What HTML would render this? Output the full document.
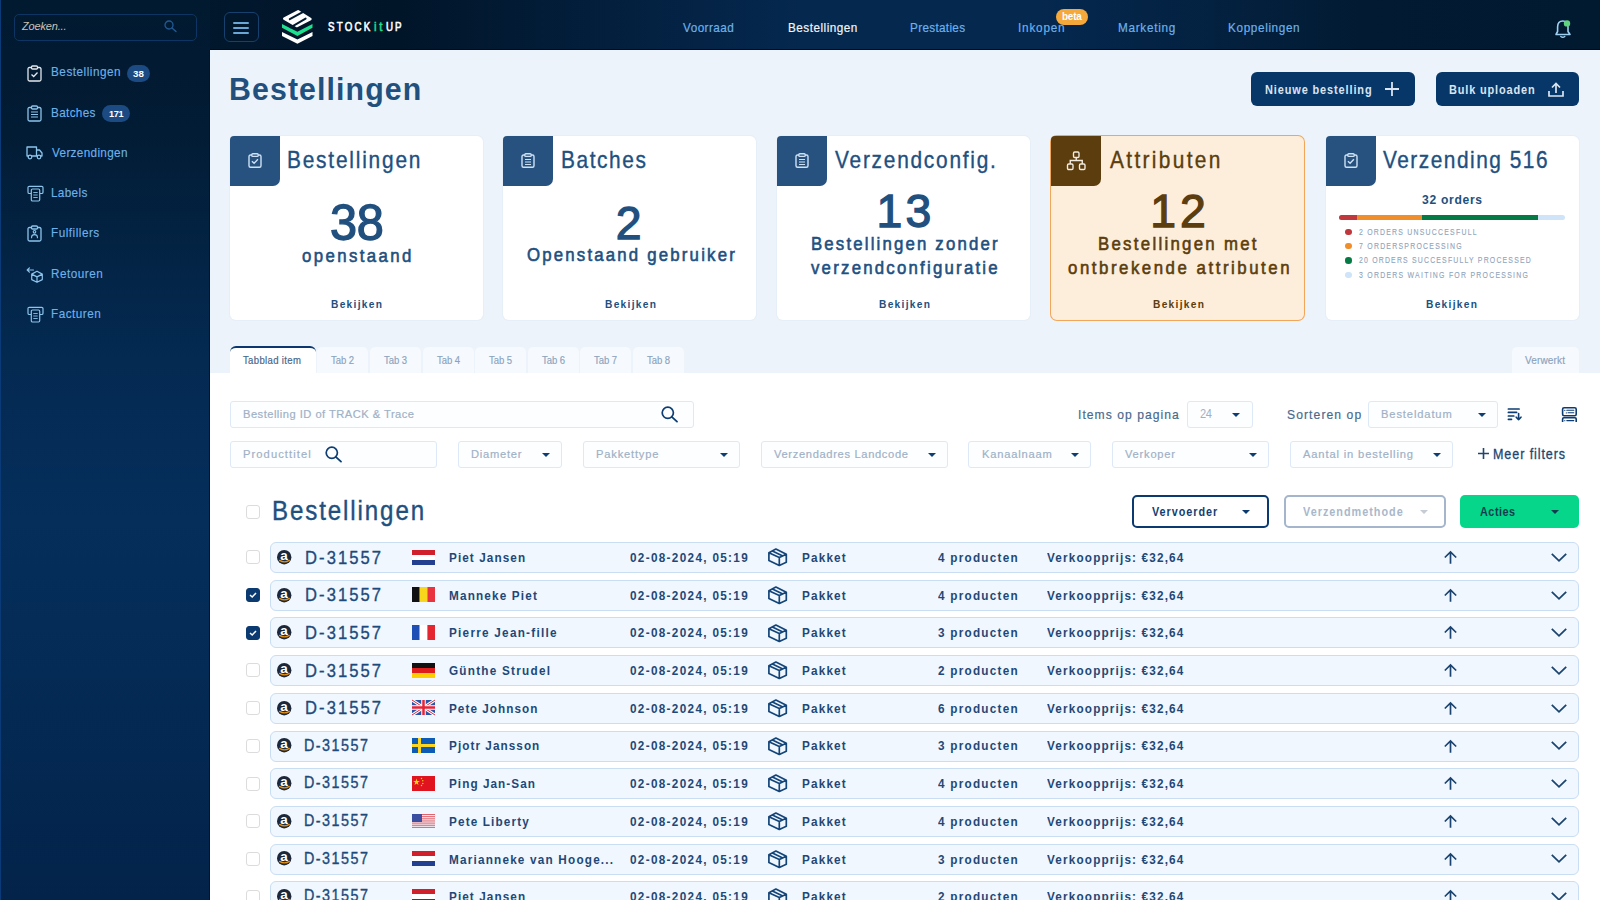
<!DOCTYPE html>
<html><head><meta charset="utf-8">
<style>
*{box-sizing:border-box}
html,body{margin:0;padding:0}
body{width:1600px;height:900px;overflow:hidden;position:relative;background:#edf3fa;font-family:"Liberation Sans",sans-serif}
.t{position:absolute;white-space:nowrap;line-height:1;}
.a{position:absolute}
svg{position:absolute;overflow:visible}
.card{position:absolute;top:136px;width:253px;height:184px;background:#fff;border-radius:6px;box-shadow:0 0 0 1px #e6eef7}
.ib{position:absolute;left:0;top:0;width:50px;height:50px;background:#27527f;border-radius:4px 0 7px 0}
.tab{position:absolute;top:347px;height:26px;width:51px;background:#f6f9fd;border-radius:5px 5px 0 0}
.fb{position:absolute;height:26.5px;border:1px solid #dde9f7;border-radius:3px;background:#fdfeff}
.row{position:absolute;left:270px;width:1309px;height:31px;background:#f0f7fe;border:1px solid #c9ddf3;border-radius:6px}
.cb{position:absolute;left:246px;width:14px;height:14px;border:1px solid #dcdcdc;border-radius:3px;background:#fff}
.cb.on{background:#0b3a70;border-color:#0b3a70}
.caret{position:absolute;width:0;height:0;border-left:4px solid transparent;border-right:4px solid transparent;border-top:4px solid #0d3d72}
</style></head><body>
<!-- header -->
<div class="a" style="left:0;top:0;width:1600px;height:50px;background:linear-gradient(90deg,#021a31 0%,#011529 25%,#05284f 50%,#05284f 65%,#021b33 85%,#011a30 100%)"></div>
<div class="a" style="left:0;top:49px;width:1600px;height:1px;background:#000c18"></div>
<!-- sidebar -->
<div class="a" style="left:0;top:0;width:210px;height:900px;background:linear-gradient(180deg,#021a30 0%,#021c35 15%,#042a52 40%,#052e5b 58%,#042b55 75%,#03234a 100%)"></div>
<div class="a" style="left:0;top:0;width:1px;height:900px;background:#0a3a78"></div>
<div class="a" style="left:209px;top:50px;width:1px;height:850px;background:#001530"></div>
<!-- white panel -->
<div class="a" style="left:210px;top:373px;width:1390px;height:527px;background:#fff"></div>
<div class="a" style="left:14px;top:14px;width:183px;height:27px;border:1px solid #0d3463;border-radius:5px"></div>
<svg style="left:164px;top:20px" width="13" height="12" viewBox="0 0 13 12"><circle cx="5" cy="5" r="4" fill="none" stroke="#1f5a94" stroke-width="1.3"/><path d="M8 8 L12 11.5" stroke="#1f5a94" stroke-width="1.4" stroke-linecap="round"/></svg>
<div class="a" style="left:224px;top:12px;width:35px;height:30px;border:1px solid #17406f;border-radius:6px"></div>
<div class="a" style="left:233px;top:22px;width:16px;height:2px;background:#6aa6d6;border-radius:1px"></div>
<div class="a" style="left:233px;top:27px;width:16px;height:2px;background:#6aa6d6;border-radius:1px"></div>
<div class="a" style="left:233px;top:32px;width:16px;height:2px;background:#6aa6d6;border-radius:1px"></div>
<svg style="left:278px;top:6px" width="40" height="42" viewBox="0 0 40 42">
<path d="M4 26.1 L19.4 33.6 L34.5 26.1 L34.5 29.9 L19.4 37.8 L4 29.9 Z" fill="#ffffff"/>
<path d="M4 18 L19.4 25.7 L34.5 18 L34.5 21.7 L19.4 30.1 L4 21.7 Z" fill="#1fe08f"/>
<path d="M20.1 5.3 L32.4 13.1 L18.7 20 L6.3 12.7 Z" fill="#ffffff" stroke="#ffffff" stroke-width="2.6" stroke-linejoin="round"/>
<path d="M11.8 13.2 L27 4.8 M27.6 12.6 L12.6 21.3" stroke="#021a30" stroke-width="2" stroke-linecap="round"/>
</svg>
<div class="a" style="left:1056px;top:8.5px;width:32px;height:16.5px;background:#f5a93b;border-radius:9px"></div>
<svg style="left:1553px;top:19px" width="20" height="20" viewBox="0 0 20 20">
<path d="M3 15.5 L17 15.5 L15 12.5 L15 8 Q15 2 9.8 2 Q4.6 2 4.6 8 L4.6 12.5 Z" fill="none" stroke="#9fd0f2" stroke-width="1.6" stroke-linejoin="round"/>
<path d="M7.8 17.5 Q9.8 19.2 11.8 17.5" fill="none" stroke="#9fd0f2" stroke-width="1.4" stroke-linecap="round"/>
<circle cx="14" cy="4.4" r="3.2" fill="#5fd47f"/></svg>
<div class="a" style="left:127px;top:65px;width:23px;height:17px;background:#1b4b82;border-radius:9px"></div>
<div class="a" style="left:102px;top:105px;width:28px;height:17px;background:#1b4b82;border-radius:9px"></div>
<svg style="left:27px;top:65px" width="15" height="17" viewBox="0 0 15 17"><path d="M4.5 2.5 L2.5 2.5 Q1 2.5 1 4 L1 14.5 Q1 16 2.5 16 L12.5 16 Q14 16 14 14.5 L14 4 Q14 2.5 12.5 2.5 L10.5 2.5" fill="none" stroke="#e3e8ee" stroke-width="1.3"/><rect x="4.5" y="1" width="6" height="3" rx="1" fill="none" stroke="#e3e8ee" stroke-width="1.3"/><path d="M4.5 9.5 L6.7 11.5 L10.5 7.5" fill="none" stroke="#e3e8ee" stroke-width="1.3"/></svg>
<svg style="left:27px;top:105px" width="15" height="17" viewBox="0 0 15 17"><path d="M4.5 2.5 L2.5 2.5 Q1 2.5 1 4 L1 14.5 Q1 16 2.5 16 L12.5 16 Q14 16 14 14.5 L14 4 Q14 2.5 12.5 2.5 L10.5 2.5" fill="none" stroke="#8cc4ec" stroke-width="1.3"/><rect x="4.5" y="1" width="6" height="3" rx="1" fill="none" stroke="#8cc4ec" stroke-width="1.3"/><path d="M4 7 H11 M4 9.5 H11 M4 12 H11" stroke="#8cc4ec" stroke-width="1.2"/></svg>
<svg style="left:26px;top:145px" width="17" height="15" viewBox="0 0 17 15"><path d="M1 2 H10.5 V11 H1 Z M10.5 5 H13.5 L16 8 V11 H10.5" fill="none" stroke="#8cc4ec" stroke-width="1.3" stroke-linejoin="round"/><circle cx="4" cy="12" r="1.8" fill="#032040" stroke="#8cc4ec" stroke-width="1.2"/><circle cx="13" cy="12" r="1.8" fill="#032040" stroke="#8cc4ec" stroke-width="1.2"/></svg>
<svg style="left:27px;top:185px" width="17" height="17" viewBox="0 0 17 17"><path d="M4 8.5 H2.3 Q1 8.5 1 7.2 V2.6 Q1 1.3 2.3 1.3 H14.7 Q16 1.3 16 2.6 V7.2 Q16 8.5 14.7 8.5 H13" fill="none" stroke="#8cc4ec" stroke-width="1.2"/><rect x="4.3" y="4" width="8.4" height="12" rx="1.2" fill="none" stroke="#8cc4ec" stroke-width="1.2"/><path d="M6.3 7.5 H10.7 M6.3 10 H10.7 M6.3 12.5 H10.7" stroke="#8cc4ec" stroke-width="0.9"/></svg>
<svg style="left:27px;top:225px" width="15" height="17" viewBox="0 0 15 17"><path d="M4.5 2.5 L2.5 2.5 Q1 2.5 1 4 L1 14.5 Q1 16 2.5 16 L12.5 16 Q14 16 14 14.5 L14 4 Q14 2.5 12.5 2.5 L10.5 2.5" fill="none" stroke="#8cc4ec" stroke-width="1.3"/><rect x="4.5" y="1" width="6" height="3" rx="1" fill="none" stroke="#8cc4ec" stroke-width="1.3"/><circle cx="7.5" cy="6.8" r="1.3" fill="none" stroke="#8cc4ec" stroke-width="1.1"/><path d="M4.6 13.2 V12 Q4.6 9.6 7.5 9.6 Q10.4 9.6 10.4 12 V13.2" fill="none" stroke="#8cc4ec" stroke-width="1.1"/></svg>
<svg style="left:26px;top:267px" width="18" height="16" viewBox="0 0 18 16"><path d="M11 4.2 L16.3 7.1 V12.6 L11 15.3 L5.7 12.6 V7.1 Z M5.7 7.1 L11 9.9 L16.3 7.1 M11 9.9 V15.3" fill="none" stroke="#8cc4ec" stroke-width="1.2" stroke-linejoin="round"/><path d="M1.2 3 H7.5 M1.2 3 L3.4 0.9 M1.2 3 L3.4 5.1" fill="none" stroke="#8cc4ec" stroke-width="1.2" stroke-linecap="round" stroke-linejoin="round"/></svg>
<svg style="left:27px;top:306px" width="17" height="17" viewBox="0 0 17 17"><path d="M4 8.5 H2.3 Q1 8.5 1 7.2 V2.6 Q1 1.3 2.3 1.3 H14.7 Q16 1.3 16 2.6 V7.2 Q16 8.5 14.7 8.5 H13" fill="none" stroke="#8cc4ec" stroke-width="1.2"/><rect x="4.3" y="4" width="8.4" height="12" rx="1.2" fill="none" stroke="#8cc4ec" stroke-width="1.2"/><path d="M6.3 7.5 H10.7 M6.3 10 H10.7 M6.3 12.5 H10.7" stroke="#8cc4ec" stroke-width="0.9"/></svg>
<div class="a" style="left:1251px;top:72px;width:164px;height:34px;background:#063768;border-radius:6px"></div>
<div class="a" style="left:1436px;top:72px;width:143px;height:34px;background:#063768;border-radius:6px"></div>
<svg style="left:1385px;top:82px" width="14" height="14" viewBox="0 0 14 14"><path d="M7 0 V14 M0 7 H14" stroke="#dbe4ef" stroke-width="1.8"/></svg>
<svg style="left:1548px;top:82px" width="16" height="15" viewBox="0 0 16 15"><path d="M1 9 V14 H15 V9" fill="none" stroke="#dbe4ef" stroke-width="1.7"/><path d="M8 11 V1.5 M4 5.5 L8 1.5 L12 5.5" fill="none" stroke="#dbe4ef" stroke-width="1.7"/></svg>
<div class="card" style="left:230.0px"></div>
<div class="ib" style="left:230.0px;top:136px"></div>
<div class="card" style="left:503.3px"></div>
<div class="ib" style="left:503.3px;top:136px"></div>
<div class="card" style="left:777.0px"></div>
<div class="ib" style="left:777.0px;top:136px"></div>
<div class="card" style="left:1051.0px;background:#fdeedb;box-shadow:0 0 0 1px #f2a65a"></div>
<div class="ib" style="left:1051.0px;top:136px;background:#5b3d0e"></div>
<div class="card" style="left:1325.5px"></div>
<div class="ib" style="left:1325.5px;top:136px"></div>
<svg style="left:248.0px;top:153.0px" width="14" height="16" viewBox="0 0 14 16"><path d="M3.8 2 L2.5 2 Q1 2 1 3.5 L1 12.8 Q1 14.3 2.5 14.3 L11.5 14.3 Q13 14.3 13 12.8 L13 3.5 Q13 2 11.5 2 L10.2 2" fill="none" stroke="#cde1f6" stroke-width="1.4"/><rect x="3.8" y="0.8" width="6.4" height="2.6" rx="1" fill="none" stroke="#cde1f6" stroke-width="1.4"/><path d="M3.9 8.3 L6.1 10.3 L9.9 6.3" fill="none" stroke="#cde1f6" stroke-width="1.4"/></svg>
<svg style="left:521.3px;top:153.0px" width="14" height="16" viewBox="0 0 14 16"><path d="M3.8 2 L2.5 2 Q1 2 1 3.5 L1 12.8 Q1 14.3 2.5 14.3 L11.5 14.3 Q13 14.3 13 12.8 L13 3.5 Q13 2 11.5 2 L10.2 2" fill="none" stroke="#cde1f6" stroke-width="1.4"/><rect x="3.8" y="0.8" width="6.4" height="2.6" rx="1" fill="none" stroke="#cde1f6" stroke-width="1.4"/><path d="M4 6.5 H10 M4 9 H10 M4 11.5 H10" stroke="#cde1f6" stroke-width="1.2"/></svg>
<svg style="left:795.0px;top:153.0px" width="14" height="16" viewBox="0 0 14 16"><path d="M3.8 2 L2.5 2 Q1 2 1 3.5 L1 12.8 Q1 14.3 2.5 14.3 L11.5 14.3 Q13 14.3 13 12.8 L13 3.5 Q13 2 11.5 2 L10.2 2" fill="none" stroke="#cde1f6" stroke-width="1.4"/><rect x="3.8" y="0.8" width="6.4" height="2.6" rx="1" fill="none" stroke="#cde1f6" stroke-width="1.4"/><path d="M4 6.5 H10 M4 9 H10 M4 11.5 H10" stroke="#cde1f6" stroke-width="1.2"/></svg>
<svg style="left:1343.5px;top:153.0px" width="14" height="16" viewBox="0 0 14 16"><path d="M3.8 2 L2.5 2 Q1 2 1 3.5 L1 12.8 Q1 14.3 2.5 14.3 L11.5 14.3 Q13 14.3 13 12.8 L13 3.5 Q13 2 11.5 2 L10.2 2" fill="none" stroke="#cde1f6" stroke-width="1.4"/><rect x="3.8" y="0.8" width="6.4" height="2.6" rx="1" fill="none" stroke="#cde1f6" stroke-width="1.4"/><path d="M3.9 8.3 L6.1 10.3 L9.9 6.3" fill="none" stroke="#cde1f6" stroke-width="1.4"/></svg>
<svg style="left:1066px;top:151px" width="21" height="20" viewBox="0 0 21 20"><rect x="7.5" y="1" width="5.5" height="5.5" rx="1.2" fill="none" stroke="#f2ebe0" stroke-width="1.4"/><rect x="1.5" y="13" width="5.5" height="5.5" rx="1.2" fill="none" stroke="#f2ebe0" stroke-width="1.4"/><rect x="13.5" y="13" width="5.5" height="5.5" rx="1.2" fill="none" stroke="#f2ebe0" stroke-width="1.4"/><path d="M10.25 6.5 V9.5 M4.25 13 V9.5 H16.25 V13" fill="none" stroke="#f2ebe0" stroke-width="1.4"/></svg>
<div class="a" style="left:1338.5px;top:215px;width:226.5px;height:5px;border-radius:3px;overflow:hidden;background:#cfe4f8"><div class="a" style="left:0;top:0;width:18.5px;height:5px;background:#c0373c"></div><div class="a" style="left:18.5px;top:0;width:64.5px;height:5px;background:#f08e2c"></div><div class="a" style="left:83px;top:0;width:116.3px;height:5px;background:#067a45"></div></div>
<div class="a" style="left:1345px;top:228.9px;width:6.6px;height:6.6px;border-radius:50%;background:#c0373c"></div>
<div class="a" style="left:1345px;top:242.7px;width:6.6px;height:6.6px;border-radius:50%;background:#f08e2c"></div>
<div class="a" style="left:1345px;top:257.1px;width:6.6px;height:6.6px;border-radius:50%;background:#067a45"></div>
<div class="a" style="left:1345px;top:271.6px;width:6.6px;height:6.6px;border-radius:50%;background:#cfe4f8"></div>
<div class="a" style="left:229.5px;top:345.5px;width:86.5px;height:28px;background:#fff;border-radius:6px 6px 0 0;border-top:2px solid #0b3670"></div>
<div class="tab" style="left:317.4px"></div>
<div class="tab" style="left:370.0px"></div>
<div class="tab" style="left:422.6px"></div>
<div class="tab" style="left:475.2px"></div>
<div class="tab" style="left:527.8px"></div>
<div class="tab" style="left:580.4px"></div>
<div class="tab" style="left:633.0px"></div>
<div class="tab" style="left:1512px;width:67px"></div>
<div class="fb" style="left:229.5px;top:401px;width:464px"></div>
<svg style="left:660.5px;top:406.0px" width="18" height="16" viewBox="0 0 18 16"><circle cx="6.8" cy="6.8" r="5.6" fill="none" stroke="#0d3d72" stroke-width="1.7"/><path d="M10.8 10.8 L16 15.6" stroke="#0d3d72" stroke-width="1.8" stroke-linecap="round"/></svg>
<div class="fb" style="left:229.5px;top:441px;width:207px"></div>
<svg style="left:324.5px;top:446.0px" width="18" height="16" viewBox="0 0 18 16"><circle cx="6.8" cy="6.8" r="5.6" fill="none" stroke="#0d3d72" stroke-width="1.7"/><path d="M10.8 10.8 L16 15.6" stroke="#0d3d72" stroke-width="1.8" stroke-linecap="round"/></svg>
<div class="fb" style="left:457.5px;top:441px;width:104.0px"></div>
<div class="caret" style="left:542.0px;top:452.5px"></div>
<div class="fb" style="left:582.5px;top:441px;width:157.0px"></div>
<div class="caret" style="left:720.0px;top:452.5px"></div>
<div class="fb" style="left:760.5px;top:441px;width:187.5px"></div>
<div class="caret" style="left:927.8px;top:452.5px"></div>
<div class="fb" style="left:968.4px;top:441px;width:123.0px"></div>
<div class="caret" style="left:1071.3px;top:452.5px"></div>
<div class="fb" style="left:1111.7px;top:441px;width:157.3px"></div>
<div class="caret" style="left:1248.8px;top:452.5px"></div>
<div class="fb" style="left:1290.0px;top:441px;width:162.5px"></div>
<div class="caret" style="left:1432.5px;top:452.5px"></div>
<div class="fb" style="left:1186.6px;top:401.2px;width:66px"></div>
<div class="caret" style="left:1232px;top:413px"></div>
<div class="fb" style="left:1368px;top:401px;width:130px"></div>
<div class="caret" style="left:1478px;top:413px"></div>
<svg style="left:1478px;top:448px" width="11" height="11" viewBox="0 0 11 11"><path d="M5.5 0 V11 M0 5.5 H11" stroke="#21456f" stroke-width="1.6"/></svg>
<svg style="left:1507px;top:407px" width="16" height="14" viewBox="0 0 16 14"><path d="M1.4 2 H12.1 M1.4 5.4 H9.6 M1.4 9 H6.8 M1.4 12.3 H4.5" stroke="#0c3c72" stroke-width="1.7" stroke-linecap="round"/><path d="M11.6 6.5 V12.7 M9.2 10.2 L11.6 12.7 L14 10.2" fill="none" stroke="#0c3c72" stroke-width="1.6" stroke-linecap="round" stroke-linejoin="round"/></svg>
<svg style="left:1560.5px;top:406px" width="17" height="17" viewBox="0 0 17 17"><rect x="1.6" y="1.8" width="13.6" height="8" rx="1.5" fill="none" stroke="#0c3c72" stroke-width="1.6"/><path d="M3.8 4.3 V4.5 M5.8 4.2 H12.8 M5.3 6.8 V7 M7 6.8 H12.8 M3.8 14.5 V14.7 M5.8 14.6 H12.8" stroke="#0c3c72" stroke-width="1.1" stroke-linecap="round"/><path d="M1.6 16 V13 Q1.6 11.8 2.8 11.8 H14 Q15.2 11.8 15.2 13 V16" fill="none" stroke="#0c3c72" stroke-width="1.6"/></svg>
<div class="cb" style="top:505px"></div>
<div class="a" style="left:1132px;top:495px;width:137px;height:33px;border:2px solid #0b3a70;border-radius:5px"></div>
<div class="caret" style="left:1242.4px;top:510px;border-top-color:#0b3a70"></div>
<div class="a" style="left:1283.5px;top:495px;width:162.5px;height:33px;border:2px solid #a4b5cc;border-radius:5px"></div>
<div class="caret" style="left:1419.6px;top:510px;border-top-color:#c3cbd6"></div>
<div class="a" style="left:1460px;top:495px;width:119px;height:33px;background:#06d68a;border-radius:5px"></div>
<div class="caret" style="left:1551px;top:510px;border-top-color:#0e3d4f"></div>
<div class="row" style="top:542.0px"></div>
<div class="cb" style="top:550.3px"></div>
<svg style="left:276.8px;top:549.8px" width="15" height="15" viewBox="0 0 15 15"><circle cx="7.2" cy="7.2" r="7.2" fill="#1c2839"/><text x="7.1" y="9.9" font-family="Liberation Sans" font-weight="700" font-size="13.5" fill="#fff" text-anchor="middle">a</text><path d="M2.6 10.4 Q7.4 13.4 12.3 10.4" fill="none" stroke="#e8900f" stroke-width="1.3" stroke-linecap="round"/></svg>
<svg style="left:412px;top:549.6px" width="23" height="15" viewBox="0 0 23 15"><rect width="23" height="5" fill="#d0202c"/><rect y="5" width="23" height="5" fill="#fff"/><rect y="10" width="23" height="5" fill="#233f8f"/></svg>
<svg style="left:768px;top:548.2px" width="20" height="19" viewBox="0 0 20 19"><path d="M0.9 4.8 L7.9 1 L18.3 6.3 V14.2 L11.3 17.4 L0.9 12.4 Z M0.9 4.8 L11.3 9.6 L18.3 6.3 M11.3 9.6 V17.4 M4.4 2.9 L14.8 8" fill="none" stroke="#144579" stroke-width="1.7" stroke-linejoin="round"/></svg>
<svg style="left:1444px;top:551.0px" width="13" height="13" viewBox="0 0 13 13"><path d="M6.5 12.8 V1 M0.8 6.5 L6.5 0.9 L12.2 6.5" fill="none" stroke="#1b4470" stroke-width="1.7"/></svg>
<svg style="left:1551px;top:552.8px" width="16" height="9" viewBox="0 0 16 9"><path d="M0.8 0.8 L8 7.8 L15.2 0.8" fill="none" stroke="#1b4470" stroke-width="1.8"/></svg>
<div class="row" style="top:579.7px"></div>
<div class="cb on" style="top:588.0px"></div><svg style="left:249px;top:591.0px" width="8" height="8" viewBox="0 0 8 8"><path d="M1 4 L3.2 6 L7 2" fill="none" stroke="#fff" stroke-width="1.5"/></svg>
<svg style="left:276.8px;top:587.5px" width="15" height="15" viewBox="0 0 15 15"><circle cx="7.2" cy="7.2" r="7.2" fill="#1c2839"/><text x="7.1" y="9.9" font-family="Liberation Sans" font-weight="700" font-size="13.5" fill="#fff" text-anchor="middle">a</text><path d="M2.6 10.4 Q7.4 13.4 12.3 10.4" fill="none" stroke="#e8900f" stroke-width="1.3" stroke-linecap="round"/></svg>
<svg style="left:412px;top:587.3px" width="23" height="15" viewBox="0 0 23 15"><rect width="7.7" height="15" fill="#111"/><rect x="7.7" width="7.7" height="15" fill="#f8d61c"/><rect x="15.4" width="7.6" height="15" fill="#e8343e"/></svg>
<svg style="left:768px;top:585.9px" width="20" height="19" viewBox="0 0 20 19"><path d="M0.9 4.8 L7.9 1 L18.3 6.3 V14.2 L11.3 17.4 L0.9 12.4 Z M0.9 4.8 L11.3 9.6 L18.3 6.3 M11.3 9.6 V17.4 M4.4 2.9 L14.8 8" fill="none" stroke="#144579" stroke-width="1.7" stroke-linejoin="round"/></svg>
<svg style="left:1444px;top:588.7px" width="13" height="13" viewBox="0 0 13 13"><path d="M6.5 12.8 V1 M0.8 6.5 L6.5 0.9 L12.2 6.5" fill="none" stroke="#1b4470" stroke-width="1.7"/></svg>
<svg style="left:1551px;top:590.5px" width="16" height="9" viewBox="0 0 16 9"><path d="M0.8 0.8 L8 7.8 L15.2 0.8" fill="none" stroke="#1b4470" stroke-width="1.8"/></svg>
<div class="row" style="top:617.4px"></div>
<div class="cb on" style="top:625.7px"></div><svg style="left:249px;top:628.7px" width="8" height="8" viewBox="0 0 8 8"><path d="M1 4 L3.2 6 L7 2" fill="none" stroke="#fff" stroke-width="1.5"/></svg>
<svg style="left:276.8px;top:625.2px" width="15" height="15" viewBox="0 0 15 15"><circle cx="7.2" cy="7.2" r="7.2" fill="#1c2839"/><text x="7.1" y="9.9" font-family="Liberation Sans" font-weight="700" font-size="13.5" fill="#fff" text-anchor="middle">a</text><path d="M2.6 10.4 Q7.4 13.4 12.3 10.4" fill="none" stroke="#e8900f" stroke-width="1.3" stroke-linecap="round"/></svg>
<svg style="left:412px;top:625.0px" width="23" height="15" viewBox="0 0 23 15"><rect width="7.7" height="15" fill="#1e4fb5"/><rect x="7.7" width="7.7" height="15" fill="#fff"/><rect x="15.4" width="7.6" height="15" fill="#e3262f"/></svg>
<svg style="left:768px;top:623.6px" width="20" height="19" viewBox="0 0 20 19"><path d="M0.9 4.8 L7.9 1 L18.3 6.3 V14.2 L11.3 17.4 L0.9 12.4 Z M0.9 4.8 L11.3 9.6 L18.3 6.3 M11.3 9.6 V17.4 M4.4 2.9 L14.8 8" fill="none" stroke="#144579" stroke-width="1.7" stroke-linejoin="round"/></svg>
<svg style="left:1444px;top:626.4px" width="13" height="13" viewBox="0 0 13 13"><path d="M6.5 12.8 V1 M0.8 6.5 L6.5 0.9 L12.2 6.5" fill="none" stroke="#1b4470" stroke-width="1.7"/></svg>
<svg style="left:1551px;top:628.2px" width="16" height="9" viewBox="0 0 16 9"><path d="M0.8 0.8 L8 7.8 L15.2 0.8" fill="none" stroke="#1b4470" stroke-width="1.8"/></svg>
<div class="row" style="top:655.1px"></div>
<div class="cb" style="top:663.4px"></div>
<svg style="left:276.8px;top:662.9px" width="15" height="15" viewBox="0 0 15 15"><circle cx="7.2" cy="7.2" r="7.2" fill="#1c2839"/><text x="7.1" y="9.9" font-family="Liberation Sans" font-weight="700" font-size="13.5" fill="#fff" text-anchor="middle">a</text><path d="M2.6 10.4 Q7.4 13.4 12.3 10.4" fill="none" stroke="#e8900f" stroke-width="1.3" stroke-linecap="round"/></svg>
<svg style="left:412px;top:662.7px" width="23" height="15" viewBox="0 0 23 15"><rect width="23" height="5" fill="#111"/><rect y="5" width="23" height="5" fill="#dd1d1d"/><rect y="10" width="23" height="5" fill="#ffce00"/></svg>
<svg style="left:768px;top:661.3px" width="20" height="19" viewBox="0 0 20 19"><path d="M0.9 4.8 L7.9 1 L18.3 6.3 V14.2 L11.3 17.4 L0.9 12.4 Z M0.9 4.8 L11.3 9.6 L18.3 6.3 M11.3 9.6 V17.4 M4.4 2.9 L14.8 8" fill="none" stroke="#144579" stroke-width="1.7" stroke-linejoin="round"/></svg>
<svg style="left:1444px;top:664.1px" width="13" height="13" viewBox="0 0 13 13"><path d="M6.5 12.8 V1 M0.8 6.5 L6.5 0.9 L12.2 6.5" fill="none" stroke="#1b4470" stroke-width="1.7"/></svg>
<svg style="left:1551px;top:665.9px" width="16" height="9" viewBox="0 0 16 9"><path d="M0.8 0.8 L8 7.8 L15.2 0.8" fill="none" stroke="#1b4470" stroke-width="1.8"/></svg>
<div class="row" style="top:692.8px"></div>
<div class="cb" style="top:701.1px"></div>
<svg style="left:276.8px;top:700.6px" width="15" height="15" viewBox="0 0 15 15"><circle cx="7.2" cy="7.2" r="7.2" fill="#1c2839"/><text x="7.1" y="9.9" font-family="Liberation Sans" font-weight="700" font-size="13.5" fill="#fff" text-anchor="middle">a</text><path d="M2.6 10.4 Q7.4 13.4 12.3 10.4" fill="none" stroke="#e8900f" stroke-width="1.3" stroke-linecap="round"/></svg>
<svg style="left:412px;top:700.4px" width="23" height="15" viewBox="0 0 23 15"><rect width="23" height="15" fill="#2a55a8"/><path d="M0 0 L23 15 M23 0 L0 15" stroke="#fff" stroke-width="3"/><path d="M0 0 L23 15 M23 0 L0 15" stroke="#e3243a" stroke-width="1"/><path d="M11.5 0 V15 M0 7.5 H23" stroke="#fff" stroke-width="4.5"/><path d="M11.5 0 V15 M0 7.5 H23" stroke="#e3243a" stroke-width="2.5"/></svg>
<svg style="left:768px;top:699.0px" width="20" height="19" viewBox="0 0 20 19"><path d="M0.9 4.8 L7.9 1 L18.3 6.3 V14.2 L11.3 17.4 L0.9 12.4 Z M0.9 4.8 L11.3 9.6 L18.3 6.3 M11.3 9.6 V17.4 M4.4 2.9 L14.8 8" fill="none" stroke="#144579" stroke-width="1.7" stroke-linejoin="round"/></svg>
<svg style="left:1444px;top:701.8px" width="13" height="13" viewBox="0 0 13 13"><path d="M6.5 12.8 V1 M0.8 6.5 L6.5 0.9 L12.2 6.5" fill="none" stroke="#1b4470" stroke-width="1.7"/></svg>
<svg style="left:1551px;top:703.6px" width="16" height="9" viewBox="0 0 16 9"><path d="M0.8 0.8 L8 7.8 L15.2 0.8" fill="none" stroke="#1b4470" stroke-width="1.8"/></svg>
<div class="row" style="top:730.5px"></div>
<div class="cb" style="top:738.8px"></div>
<svg style="left:276.8px;top:738.3px" width="15" height="15" viewBox="0 0 15 15"><circle cx="7.2" cy="7.2" r="7.2" fill="#1c2839"/><text x="7.1" y="9.9" font-family="Liberation Sans" font-weight="700" font-size="13.5" fill="#fff" text-anchor="middle">a</text><path d="M2.6 10.4 Q7.4 13.4 12.3 10.4" fill="none" stroke="#e8900f" stroke-width="1.3" stroke-linecap="round"/></svg>
<svg style="left:412px;top:738.1px" width="23" height="15" viewBox="0 0 23 15"><rect width="23" height="15" fill="#0d5bb5"/><path d="M7.5 0 V15 M0 7.5 H23" stroke="#fcd422" stroke-width="3"/></svg>
<svg style="left:768px;top:736.7px" width="20" height="19" viewBox="0 0 20 19"><path d="M0.9 4.8 L7.9 1 L18.3 6.3 V14.2 L11.3 17.4 L0.9 12.4 Z M0.9 4.8 L11.3 9.6 L18.3 6.3 M11.3 9.6 V17.4 M4.4 2.9 L14.8 8" fill="none" stroke="#144579" stroke-width="1.7" stroke-linejoin="round"/></svg>
<svg style="left:1444px;top:739.5px" width="13" height="13" viewBox="0 0 13 13"><path d="M6.5 12.8 V1 M0.8 6.5 L6.5 0.9 L12.2 6.5" fill="none" stroke="#1b4470" stroke-width="1.7"/></svg>
<svg style="left:1551px;top:741.3px" width="16" height="9" viewBox="0 0 16 9"><path d="M0.8 0.8 L8 7.8 L15.2 0.8" fill="none" stroke="#1b4470" stroke-width="1.8"/></svg>
<div class="row" style="top:768.2px"></div>
<div class="cb" style="top:776.5px"></div>
<svg style="left:276.8px;top:776.0px" width="15" height="15" viewBox="0 0 15 15"><circle cx="7.2" cy="7.2" r="7.2" fill="#1c2839"/><text x="7.1" y="9.9" font-family="Liberation Sans" font-weight="700" font-size="13.5" fill="#fff" text-anchor="middle">a</text><path d="M2.6 10.4 Q7.4 13.4 12.3 10.4" fill="none" stroke="#e8900f" stroke-width="1.3" stroke-linecap="round"/></svg>
<svg style="left:412px;top:775.8px" width="23" height="15" viewBox="0 0 23 15"><rect width="23" height="15" fill="#e0141f"/><path d="M4.5 2.5 L5.3 5 L7.8 5 L5.8 6.5 L6.5 9 L4.5 7.5 L2.5 9 L3.2 6.5 L1.2 5 L3.7 5 Z" fill="#ffd21a"/><circle cx="9.5" cy="2.5" r="0.7" fill="#ffd21a"/><circle cx="10.8" cy="4.8" r="0.7" fill="#ffd21a"/><circle cx="10.8" cy="7.5" r="0.7" fill="#ffd21a"/><circle cx="9.5" cy="9.5" r="0.7" fill="#ffd21a"/></svg>
<svg style="left:768px;top:774.4px" width="20" height="19" viewBox="0 0 20 19"><path d="M0.9 4.8 L7.9 1 L18.3 6.3 V14.2 L11.3 17.4 L0.9 12.4 Z M0.9 4.8 L11.3 9.6 L18.3 6.3 M11.3 9.6 V17.4 M4.4 2.9 L14.8 8" fill="none" stroke="#144579" stroke-width="1.7" stroke-linejoin="round"/></svg>
<svg style="left:1444px;top:777.2px" width="13" height="13" viewBox="0 0 13 13"><path d="M6.5 12.8 V1 M0.8 6.5 L6.5 0.9 L12.2 6.5" fill="none" stroke="#1b4470" stroke-width="1.7"/></svg>
<svg style="left:1551px;top:779.0px" width="16" height="9" viewBox="0 0 16 9"><path d="M0.8 0.8 L8 7.8 L15.2 0.8" fill="none" stroke="#1b4470" stroke-width="1.8"/></svg>
<div class="row" style="top:805.9px"></div>
<div class="cb" style="top:814.2px"></div>
<svg style="left:276.8px;top:813.7px" width="15" height="15" viewBox="0 0 15 15"><circle cx="7.2" cy="7.2" r="7.2" fill="#1c2839"/><text x="7.1" y="9.9" font-family="Liberation Sans" font-weight="700" font-size="13.5" fill="#fff" text-anchor="middle">a</text><path d="M2.6 10.4 Q7.4 13.4 12.3 10.4" fill="none" stroke="#e8900f" stroke-width="1.3" stroke-linecap="round"/></svg>
<svg style="left:412px;top:813.5px" width="23" height="15" viewBox="0 0 23 15"><rect y="0.00" width="23" height="1.07" fill="#e0626a"/><rect y="2.14" width="23" height="1.07" fill="#e0626a"/><rect y="4.28" width="23" height="1.07" fill="#e0626a"/><rect y="6.42" width="23" height="1.07" fill="#e0626a"/><rect y="8.56" width="23" height="1.07" fill="#e0626a"/><rect y="10.70" width="23" height="1.07" fill="#e0626a"/><rect y="12.84" width="23" height="1.07" fill="#e0626a"/><rect y="0" width="23" height="15" fill="none"/><rect width="10" height="8" fill="#3b4fa0"/></svg>
<svg style="left:768px;top:812.1px" width="20" height="19" viewBox="0 0 20 19"><path d="M0.9 4.8 L7.9 1 L18.3 6.3 V14.2 L11.3 17.4 L0.9 12.4 Z M0.9 4.8 L11.3 9.6 L18.3 6.3 M11.3 9.6 V17.4 M4.4 2.9 L14.8 8" fill="none" stroke="#144579" stroke-width="1.7" stroke-linejoin="round"/></svg>
<svg style="left:1444px;top:814.9px" width="13" height="13" viewBox="0 0 13 13"><path d="M6.5 12.8 V1 M0.8 6.5 L6.5 0.9 L12.2 6.5" fill="none" stroke="#1b4470" stroke-width="1.7"/></svg>
<svg style="left:1551px;top:816.7px" width="16" height="9" viewBox="0 0 16 9"><path d="M0.8 0.8 L8 7.8 L15.2 0.8" fill="none" stroke="#1b4470" stroke-width="1.8"/></svg>
<div class="row" style="top:843.6px"></div>
<div class="cb" style="top:851.9px"></div>
<svg style="left:276.8px;top:851.4px" width="15" height="15" viewBox="0 0 15 15"><circle cx="7.2" cy="7.2" r="7.2" fill="#1c2839"/><text x="7.1" y="9.9" font-family="Liberation Sans" font-weight="700" font-size="13.5" fill="#fff" text-anchor="middle">a</text><path d="M2.6 10.4 Q7.4 13.4 12.3 10.4" fill="none" stroke="#e8900f" stroke-width="1.3" stroke-linecap="round"/></svg>
<svg style="left:412px;top:851.2px" width="23" height="15" viewBox="0 0 23 15"><rect width="23" height="5" fill="#d0202c"/><rect y="5" width="23" height="5" fill="#fff"/><rect y="10" width="23" height="5" fill="#233f8f"/></svg>
<svg style="left:768px;top:849.8px" width="20" height="19" viewBox="0 0 20 19"><path d="M0.9 4.8 L7.9 1 L18.3 6.3 V14.2 L11.3 17.4 L0.9 12.4 Z M0.9 4.8 L11.3 9.6 L18.3 6.3 M11.3 9.6 V17.4 M4.4 2.9 L14.8 8" fill="none" stroke="#144579" stroke-width="1.7" stroke-linejoin="round"/></svg>
<svg style="left:1444px;top:852.6px" width="13" height="13" viewBox="0 0 13 13"><path d="M6.5 12.8 V1 M0.8 6.5 L6.5 0.9 L12.2 6.5" fill="none" stroke="#1b4470" stroke-width="1.7"/></svg>
<svg style="left:1551px;top:854.4px" width="16" height="9" viewBox="0 0 16 9"><path d="M0.8 0.8 L8 7.8 L15.2 0.8" fill="none" stroke="#1b4470" stroke-width="1.8"/></svg>
<div class="row" style="top:881.3px"></div>
<div class="cb" style="top:889.6px"></div>
<svg style="left:276.8px;top:889.1px" width="15" height="15" viewBox="0 0 15 15"><circle cx="7.2" cy="7.2" r="7.2" fill="#1c2839"/><text x="7.1" y="9.9" font-family="Liberation Sans" font-weight="700" font-size="13.5" fill="#fff" text-anchor="middle">a</text><path d="M2.6 10.4 Q7.4 13.4 12.3 10.4" fill="none" stroke="#e8900f" stroke-width="1.3" stroke-linecap="round"/></svg>
<svg style="left:412px;top:888.9px" width="23" height="15" viewBox="0 0 23 15"><rect width="23" height="5" fill="#d0202c"/><rect y="5" width="23" height="5" fill="#fff"/><rect y="10" width="23" height="5" fill="#233f8f"/></svg>
<svg style="left:768px;top:887.5px" width="20" height="19" viewBox="0 0 20 19"><path d="M0.9 4.8 L7.9 1 L18.3 6.3 V14.2 L11.3 17.4 L0.9 12.4 Z M0.9 4.8 L11.3 9.6 L18.3 6.3 M11.3 9.6 V17.4 M4.4 2.9 L14.8 8" fill="none" stroke="#144579" stroke-width="1.7" stroke-linejoin="round"/></svg>
<svg style="left:1444px;top:890.3px" width="13" height="13" viewBox="0 0 13 13"><path d="M6.5 12.8 V1 M0.8 6.5 L6.5 0.9 L12.2 6.5" fill="none" stroke="#1b4470" stroke-width="1.7"/></svg>
<svg style="left:1551px;top:892.1px" width="16" height="9" viewBox="0 0 16 9"><path d="M0.8 0.8 L8 7.8 L15.2 0.8" fill="none" stroke="#1b4470" stroke-width="1.8"/></svg>
<div class="t" style="left:22.35px;top:21.19px;font-size:11.59px;letter-spacing:-0.178px;color:#c9c2b5;transform:scaleX(0.9500);transform-origin:0 0;font-style:italic">Zoeken...</div>
<div class="t" style="left:51.42px;top:65.32px;font-size:13.33px;letter-spacing:0.593px;color:#6db1ea;transform:scaleX(0.8800);transform-origin:0 0;-webkit-text-stroke:0.15px #6db1ea">Bestellingen</div>
<div class="t" style="left:51.42px;top:105.52px;font-size:13.33px;letter-spacing:0.399px;color:#6db1ea;transform:scaleX(0.8800);transform-origin:0 0;-webkit-text-stroke:0.15px #6db1ea">Batches</div>
<div class="t" style="left:52.30px;top:145.62px;font-size:13.33px;letter-spacing:0.385px;color:#6db1ea;transform:scaleX(0.8800);transform-origin:0 0;-webkit-text-stroke:0.15px #6db1ea">Verzendingen</div>
<div class="t" style="left:51.42px;top:186.22px;font-size:13.33px;letter-spacing:0.391px;color:#6db1ea;transform:scaleX(0.8800);transform-origin:0 0;-webkit-text-stroke:0.15px #6db1ea">Labels</div>
<div class="t" style="left:51.42px;top:226.42px;font-size:13.33px;letter-spacing:0.571px;color:#6db1ea;transform:scaleX(0.8800);transform-origin:0 0;-webkit-text-stroke:0.15px #6db1ea">Fulfillers</div>
<div class="t" style="left:51.42px;top:266.52px;font-size:13.33px;letter-spacing:0.583px;color:#6db1ea;transform:scaleX(0.8800);transform-origin:0 0;-webkit-text-stroke:0.15px #6db1ea">Retouren</div>
<div class="t" style="left:51.42px;top:306.72px;font-size:13.33px;letter-spacing:0.561px;color:#6db1ea;transform:scaleX(0.8800);transform-origin:0 0;-webkit-text-stroke:0.15px #6db1ea">Facturen</div>
<div class="t" style="left:133.00px;top:69.18px;font-size:9.71px;letter-spacing:0.104px;color:#ffffff;font-weight:700">38</div>
<div class="t" style="left:109.00px;top:109.18px;font-size:9.71px;letter-spacing:-0.319px;color:#ffffff;transform:scaleX(0.9409);transform-origin:0 0;font-weight:700">171</div>
<div class="t" style="left:683.00px;top:21.02px;font-size:13.33px;letter-spacing:0.529px;color:#6db1ea;transform:scaleX(0.8800);transform-origin:0 0;-webkit-text-stroke:0.20px #6db1ea">Voorraad</div>
<div class="t" style="left:787.52px;top:21.02px;font-size:13.33px;letter-spacing:0.562px;color:#f2f4f6;transform:scaleX(0.8800);transform-origin:0 0;-webkit-text-stroke:0.20px #f2f4f6">Bestellingen</div>
<div class="t" style="left:910.12px;top:21.02px;font-size:13.33px;letter-spacing:0.371px;color:#6db1ea;transform:scaleX(0.8800);transform-origin:0 0;-webkit-text-stroke:0.20px #6db1ea">Prestaties</div>
<div class="t" style="left:1018.12px;top:21.02px;font-size:13.33px;letter-spacing:0.929px;color:#6db1ea;transform:scaleX(0.8800);transform-origin:0 0;-webkit-text-stroke:0.20px #6db1ea">Inkopen</div>
<div class="t" style="left:1118.12px;top:21.02px;font-size:13.33px;letter-spacing:0.816px;color:#6db1ea;transform:scaleX(0.8800);transform-origin:0 0;-webkit-text-stroke:0.20px #6db1ea">Marketing</div>
<div class="t" style="left:1227.72px;top:21.02px;font-size:13.33px;letter-spacing:0.730px;color:#6db1ea;transform:scaleX(0.8800);transform-origin:0 0;-webkit-text-stroke:0.20px #6db1ea">Koppelingen</div>
<div class="t" style="left:1061.50px;top:11.97px;font-size:10.43px;letter-spacing:-0.193px;color:#ffffff;transform:scaleX(0.9500);transform-origin:0 0;font-weight:700">beta</div>
<div class="t" style="left:327.50px;top:21.64px;font-size:11.88px;letter-spacing:2.703px;color:#ffffff;transform:scaleX(0.8200);transform-origin:0 0;-webkit-text-stroke:0.60px #ffffff">STOCK</div>
<div class="t" style="left:374.00px;top:20.91px;font-size:12.75px;letter-spacing:2.945px;color:#1fe08f;transform:scaleX(0.9000);transform-origin:0 0;-webkit-text-stroke:0.50px #1fe08f">it</div>
<div class="t" style="left:386.40px;top:21.64px;font-size:11.88px;letter-spacing:2.449px;color:#ffffff;transform:scaleX(0.8200);transform-origin:0 0;-webkit-text-stroke:0.60px #ffffff">UP</div>
<div class="t" style="left:229.10px;top:73.81px;font-size:31.88px;letter-spacing:1.172px;color:#21507f;transform:scaleX(0.9500);transform-origin:0 0;font-weight:700">Bestellingen</div>
<div class="t" style="left:1264.80px;top:83.50px;font-size:12.17px;letter-spacing:0.984px;color:#dbe4ef;transform:scaleX(0.9000);transform-origin:0 0;font-weight:700">Nieuwe bestelling</div>
<div class="t" style="left:1449.40px;top:83.50px;font-size:12.17px;letter-spacing:0.945px;color:#dbe4ef;transform:scaleX(0.9000);transform-origin:0 0;font-weight:700">Bulk uploaden</div>
<div class="t" style="left:287.40px;top:149.07px;font-size:23.19px;letter-spacing:1.991px;color:#21507f;transform:scaleX(0.9000);transform-origin:0 0;-webkit-text-stroke:0.35px #21507f">Bestellingen</div>
<div class="t" style="left:561.30px;top:149.07px;font-size:23.19px;letter-spacing:1.746px;color:#21507f;transform:scaleX(0.9000);transform-origin:0 0;-webkit-text-stroke:0.35px #21507f">Batches</div>
<div class="t" style="left:835.40px;top:149.27px;font-size:23.19px;letter-spacing:1.952px;color:#21507f;transform:scaleX(0.9000);transform-origin:0 0;-webkit-text-stroke:0.35px #21507f">Verzendconfig.</div>
<div class="t" style="left:1109.50px;top:149.37px;font-size:23.19px;letter-spacing:2.590px;color:#5b3d0e;transform:scaleX(0.9000);transform-origin:0 0;-webkit-text-stroke:0.35px #5b3d0e">Attributen</div>
<div class="t" style="left:1383.30px;top:149.27px;font-size:23.19px;letter-spacing:1.664px;color:#21507f;transform:scaleX(0.9000);transform-origin:0 0;-webkit-text-stroke:0.35px #21507f">Verzending 516</div>
<div class="t" style="left:329.51px;top:197.88px;font-size:49.28px;letter-spacing:-0.303px;color:#21507f;transform:scaleX(0.9886);transform-origin:0 0;-webkit-text-stroke:1.30px #21507f">38</div>
<div class="t" style="left:615.80px;top:199.64px;font-size:46.38px;letter-spacing:0.000px;color:#21507f;-webkit-text-stroke:1.30px #21507f">2</div>
<div class="t" style="left:876.40px;top:188.14px;font-size:46.38px;letter-spacing:3.208px;color:#21507f;-webkit-text-stroke:1.30px #21507f">13</div>
<div class="t" style="left:1150.30px;top:188.14px;font-size:46.38px;letter-spacing:3.908px;color:#5b3d0e;-webkit-text-stroke:1.30px #5b3d0e">12</div>
<div class="t" style="left:302.00px;top:247.34px;font-size:18.26px;letter-spacing:2.596px;color:#21507f;transform:scaleX(0.9200);transform-origin:0 0;-webkit-text-stroke:0.60px #21507f">openstaand</div>
<div class="t" style="left:526.70px;top:245.54px;font-size:18.26px;letter-spacing:2.381px;color:#21507f;transform:scaleX(0.9200);transform-origin:0 0;-webkit-text-stroke:0.60px #21507f">Openstaand gebruiker</div>
<div class="t" style="left:810.78px;top:234.94px;font-size:18.26px;letter-spacing:2.356px;color:#21507f;transform:scaleX(0.9200);transform-origin:0 0;-webkit-text-stroke:0.60px #21507f">Bestellingen zonder</div>
<div class="t" style="left:810.50px;top:258.94px;font-size:18.26px;letter-spacing:2.422px;color:#21507f;transform:scaleX(0.9200);transform-origin:0 0;-webkit-text-stroke:0.60px #21507f">verzendconfiguratie</div>
<div class="t" style="left:1098.08px;top:234.94px;font-size:18.26px;letter-spacing:2.490px;color:#5b3d0e;transform:scaleX(0.9200);transform-origin:0 0;-webkit-text-stroke:0.60px #5b3d0e">Bestellingen met</div>
<div class="t" style="left:1067.50px;top:258.94px;font-size:18.26px;letter-spacing:2.771px;color:#5b3d0e;transform:scaleX(0.9200);transform-origin:0 0;-webkit-text-stroke:0.60px #5b3d0e">ontbrekende attributen</div>
<div class="t" style="left:331.00px;top:299.13px;font-size:10.72px;letter-spacing:1.359px;color:#21507f;transform:scaleX(0.9500);transform-origin:0 0;font-weight:700">Bekijken</div>
<div class="t" style="left:604.80px;top:299.13px;font-size:10.72px;letter-spacing:1.359px;color:#21507f;transform:scaleX(0.9500);transform-origin:0 0;font-weight:700">Bekijken</div>
<div class="t" style="left:878.80px;top:299.13px;font-size:10.72px;letter-spacing:1.359px;color:#21507f;transform:scaleX(0.9500);transform-origin:0 0;font-weight:700">Bekijken</div>
<div class="t" style="left:1152.80px;top:299.13px;font-size:10.72px;letter-spacing:1.359px;color:#5b3d0e;transform:scaleX(0.9500);transform-origin:0 0;font-weight:700">Bekijken</div>
<div class="t" style="left:1426.40px;top:299.13px;font-size:10.72px;letter-spacing:1.359px;color:#21507f;transform:scaleX(0.9500);transform-origin:0 0;font-weight:700">Bekijken</div>
<div class="t" style="left:1421.80px;top:193.61px;font-size:12.75px;letter-spacing:0.730px;color:#21507f;transform:scaleX(0.9500);transform-origin:0 0;font-weight:700">32 orders</div>
<div class="t" style="left:1358.90px;top:227.88px;font-size:8.41px;letter-spacing:1.515px;color:#8ea3bb;transform:scaleX(0.8200);transform-origin:0 0;-webkit-text-stroke:0.10px #8ea3bb">2 ORDERS UNSUCCESFULL</div>
<div class="t" style="left:1358.90px;top:242.08px;font-size:8.41px;letter-spacing:1.538px;color:#8ea3bb;transform:scaleX(0.8200);transform-origin:0 0;-webkit-text-stroke:0.10px #8ea3bb">7 ORDERSPROCESSING</div>
<div class="t" style="left:1358.90px;top:256.48px;font-size:8.41px;letter-spacing:1.463px;color:#8ea3bb;transform:scaleX(0.8200);transform-origin:0 0;-webkit-text-stroke:0.10px #8ea3bb">20 ORDERS SUCCESFULLY PROCESSED</div>
<div class="t" style="left:1358.90px;top:270.88px;font-size:8.41px;letter-spacing:1.549px;color:#8ea3bb;transform:scaleX(0.8200);transform-origin:0 0;-webkit-text-stroke:0.10px #8ea3bb">3 ORDERS WAITING FOR PROCESSING</div>
<div class="t" style="left:243.20px;top:355.24px;font-size:10.58px;letter-spacing:0.389px;color:#46688c;transform:scaleX(0.9000);transform-origin:0 0;-webkit-text-stroke:0.20px #46688c">Tabblad item</div>
<div class="t" style="left:331.30px;top:355.24px;font-size:10.58px;letter-spacing:-0.054px;color:#8ba3bd;transform:scaleX(0.9000);transform-origin:0 0;-webkit-text-stroke:0.15px #8ba3bd">Tab 2</div>
<div class="t" style="left:383.90px;top:355.24px;font-size:10.58px;letter-spacing:-0.054px;color:#8ba3bd;transform:scaleX(0.9000);transform-origin:0 0;-webkit-text-stroke:0.15px #8ba3bd">Tab 3</div>
<div class="t" style="left:436.50px;top:355.24px;font-size:10.58px;letter-spacing:-0.054px;color:#8ba3bd;transform:scaleX(0.9000);transform-origin:0 0;-webkit-text-stroke:0.15px #8ba3bd">Tab 4</div>
<div class="t" style="left:489.10px;top:355.24px;font-size:10.58px;letter-spacing:-0.054px;color:#8ba3bd;transform:scaleX(0.9000);transform-origin:0 0;-webkit-text-stroke:0.15px #8ba3bd">Tab 5</div>
<div class="t" style="left:541.70px;top:355.24px;font-size:10.58px;letter-spacing:-0.054px;color:#8ba3bd;transform:scaleX(0.9000);transform-origin:0 0;-webkit-text-stroke:0.15px #8ba3bd">Tab 6</div>
<div class="t" style="left:594.30px;top:355.24px;font-size:10.58px;letter-spacing:-0.054px;color:#8ba3bd;transform:scaleX(0.9000);transform-origin:0 0;-webkit-text-stroke:0.15px #8ba3bd">Tab 7</div>
<div class="t" style="left:646.90px;top:355.24px;font-size:10.58px;letter-spacing:-0.054px;color:#8ba3bd;transform:scaleX(0.9000);transform-origin:0 0;-webkit-text-stroke:0.15px #8ba3bd">Tab 8</div>
<div class="t" style="left:1525.40px;top:354.94px;font-size:10.58px;letter-spacing:0.128px;color:#8ba3bd;transform:scaleX(0.9500);transform-origin:0 0;-webkit-text-stroke:0.15px #8ba3bd">Verwerkt</div>
<div class="t" style="left:242.80px;top:408.16px;font-size:11.74px;letter-spacing:0.504px;color:#9fb1c6;transform:scaleX(0.9500);transform-origin:0 0;-webkit-text-stroke:0.20px #9fb1c6">Bestelling ID of TRACK &amp; Trace</div>
<div class="t" style="left:242.80px;top:448.26px;font-size:11.74px;letter-spacing:1.149px;color:#9fb1c6;transform:scaleX(0.9500);transform-origin:0 0;-webkit-text-stroke:0.20px #9fb1c6">Producttitel</div>
<div class="t" style="left:471.00px;top:448.26px;font-size:11.74px;letter-spacing:0.796px;color:#9fb1c6;transform:scaleX(0.9500);transform-origin:0 0;-webkit-text-stroke:0.20px #9fb1c6">Diameter</div>
<div class="t" style="left:595.60px;top:448.26px;font-size:11.74px;letter-spacing:0.848px;color:#9fb1c6;transform:scaleX(0.9500);transform-origin:0 0;-webkit-text-stroke:0.20px #9fb1c6">Pakkettype</div>
<div class="t" style="left:774.00px;top:448.26px;font-size:11.74px;letter-spacing:0.692px;color:#9fb1c6;transform:scaleX(0.9500);transform-origin:0 0;-webkit-text-stroke:0.20px #9fb1c6">Verzendadres Landcode</div>
<div class="t" style="left:982.00px;top:448.26px;font-size:11.74px;letter-spacing:0.835px;color:#9fb1c6;transform:scaleX(0.9500);transform-origin:0 0;-webkit-text-stroke:0.20px #9fb1c6">Kanaalnaam</div>
<div class="t" style="left:1125.40px;top:448.26px;font-size:11.74px;letter-spacing:0.811px;color:#9fb1c6;transform:scaleX(0.9500);transform-origin:0 0;-webkit-text-stroke:0.20px #9fb1c6">Verkoper</div>
<div class="t" style="left:1303.00px;top:448.26px;font-size:11.74px;letter-spacing:0.910px;color:#9fb1c6;transform:scaleX(0.9500);transform-origin:0 0;-webkit-text-stroke:0.20px #9fb1c6">Aantal in bestelling</div>
<div class="t" style="left:1492.85px;top:447.73px;font-size:13.91px;letter-spacing:1.032px;color:#21456f;transform:scaleX(0.9000);transform-origin:0 0;-webkit-text-stroke:0.30px #21456f">Meer filters</div>
<div class="t" style="left:1078.10px;top:407.59px;font-size:13.48px;letter-spacing:1.158px;color:#4a6a8c;transform:scaleX(0.9000);transform-origin:0 0;-webkit-text-stroke:0.20px #4a6a8c">Items op pagina</div>
<div class="t" style="left:1200.00px;top:408.20px;font-size:12.17px;letter-spacing:-0.330px;color:#9fb1c6;transform:scaleX(0.9084);transform-origin:0 0">24</div>
<div class="t" style="left:1286.75px;top:408.09px;font-size:13.48px;letter-spacing:1.205px;color:#4a6a8c;transform:scaleX(0.9000);transform-origin:0 0;-webkit-text-stroke:0.20px #4a6a8c">Sorteren op</div>
<div class="t" style="left:1381.00px;top:408.16px;font-size:11.74px;letter-spacing:0.923px;color:#9fb1c6;transform:scaleX(0.9500);transform-origin:0 0;-webkit-text-stroke:0.20px #9fb1c6">Besteldatum</div>
<div class="t" style="left:271.60px;top:498.11px;font-size:26.81px;letter-spacing:2.093px;color:#21507f;transform:scaleX(0.9000);transform-origin:0 0;-webkit-text-stroke:0.40px #21507f">Bestellingen</div>
<div class="t" style="left:1152.00px;top:506.32px;font-size:12.03px;letter-spacing:1.074px;color:#143f70;transform:scaleX(0.9000);transform-origin:0 0;font-weight:700">Vervoerder</div>
<div class="t" style="left:1303.00px;top:506.32px;font-size:12.03px;letter-spacing:1.127px;color:#a9b8cb;transform:scaleX(0.9000);transform-origin:0 0;font-weight:700">Verzendmethode</div>
<div class="t" style="left:1480.00px;top:506.32px;font-size:12.03px;letter-spacing:0.590px;color:#0e3d4f;transform:scaleX(0.9000);transform-origin:0 0;font-weight:700">Acties</div>
<div class="t" style="left:304.50px;top:548.62px;font-size:18.41px;letter-spacing:2.309px;color:#1d4a7a;transform:scaleX(0.9000);transform-origin:0 0;-webkit-text-stroke:0.35px #1d4a7a">D-31557</div>
<div class="t" style="left:448.70px;top:550.96px;font-size:13.04px;letter-spacing:1.209px;color:#1f4877;transform:scaleX(0.9000);transform-origin:0 0;font-weight:700">Piet Jansen</div>
<div class="t" style="left:629.50px;top:550.96px;font-size:13.04px;letter-spacing:1.473px;color:#1f4877;transform:scaleX(0.9000);transform-origin:0 0;font-weight:700">02-08-2024, 05:19</div>
<div class="t" style="left:801.70px;top:550.96px;font-size:13.04px;letter-spacing:1.308px;color:#1f4877;transform:scaleX(0.9000);transform-origin:0 0;font-weight:700">Pakket</div>
<div class="t" style="left:937.50px;top:550.96px;font-size:13.04px;letter-spacing:1.394px;color:#1f4877;transform:scaleX(0.9000);transform-origin:0 0;font-weight:700">4 producten</div>
<div class="t" style="left:1047.00px;top:550.96px;font-size:13.04px;letter-spacing:1.301px;color:#1f4877;transform:scaleX(0.9000);transform-origin:0 0;font-weight:700">Verkoopprijs: €32,64</div>
<div class="t" style="left:304.50px;top:586.32px;font-size:18.41px;letter-spacing:2.309px;color:#1d4a7a;transform:scaleX(0.9000);transform-origin:0 0;-webkit-text-stroke:0.35px #1d4a7a">D-31557</div>
<div class="t" style="left:448.70px;top:588.66px;font-size:13.04px;letter-spacing:1.298px;color:#1f4877;transform:scaleX(0.9000);transform-origin:0 0;font-weight:700">Manneke Piet</div>
<div class="t" style="left:629.50px;top:588.66px;font-size:13.04px;letter-spacing:1.473px;color:#1f4877;transform:scaleX(0.9000);transform-origin:0 0;font-weight:700">02-08-2024, 05:19</div>
<div class="t" style="left:801.70px;top:588.66px;font-size:13.04px;letter-spacing:1.308px;color:#1f4877;transform:scaleX(0.9000);transform-origin:0 0;font-weight:700">Pakket</div>
<div class="t" style="left:937.50px;top:588.66px;font-size:13.04px;letter-spacing:1.394px;color:#1f4877;transform:scaleX(0.9000);transform-origin:0 0;font-weight:700">4 producten</div>
<div class="t" style="left:1047.00px;top:588.66px;font-size:13.04px;letter-spacing:1.301px;color:#1f4877;transform:scaleX(0.9000);transform-origin:0 0;font-weight:700">Verkoopprijs: €32,64</div>
<div class="t" style="left:304.50px;top:624.02px;font-size:18.41px;letter-spacing:2.309px;color:#1d4a7a;transform:scaleX(0.9000);transform-origin:0 0;-webkit-text-stroke:0.35px #1d4a7a">D-31557</div>
<div class="t" style="left:448.70px;top:626.36px;font-size:13.04px;letter-spacing:1.401px;color:#1f4877;transform:scaleX(0.9000);transform-origin:0 0;font-weight:700">Pierre Jean-fille</div>
<div class="t" style="left:629.50px;top:626.36px;font-size:13.04px;letter-spacing:1.473px;color:#1f4877;transform:scaleX(0.9000);transform-origin:0 0;font-weight:700">02-08-2024, 05:19</div>
<div class="t" style="left:801.70px;top:626.36px;font-size:13.04px;letter-spacing:1.308px;color:#1f4877;transform:scaleX(0.9000);transform-origin:0 0;font-weight:700">Pakket</div>
<div class="t" style="left:937.50px;top:626.36px;font-size:13.04px;letter-spacing:1.394px;color:#1f4877;transform:scaleX(0.9000);transform-origin:0 0;font-weight:700">3 producten</div>
<div class="t" style="left:1047.00px;top:626.36px;font-size:13.04px;letter-spacing:1.301px;color:#1f4877;transform:scaleX(0.9000);transform-origin:0 0;font-weight:700">Verkoopprijs: €32,64</div>
<div class="t" style="left:304.50px;top:661.72px;font-size:18.41px;letter-spacing:2.309px;color:#1d4a7a;transform:scaleX(0.9000);transform-origin:0 0;-webkit-text-stroke:0.35px #1d4a7a">D-31557</div>
<div class="t" style="left:448.70px;top:664.06px;font-size:13.04px;letter-spacing:1.389px;color:#1f4877;transform:scaleX(0.9000);transform-origin:0 0;font-weight:700">Günthe Strudel</div>
<div class="t" style="left:629.50px;top:664.06px;font-size:13.04px;letter-spacing:1.473px;color:#1f4877;transform:scaleX(0.9000);transform-origin:0 0;font-weight:700">02-08-2024, 05:19</div>
<div class="t" style="left:801.70px;top:664.06px;font-size:13.04px;letter-spacing:1.308px;color:#1f4877;transform:scaleX(0.9000);transform-origin:0 0;font-weight:700">Pakket</div>
<div class="t" style="left:937.50px;top:664.06px;font-size:13.04px;letter-spacing:1.394px;color:#1f4877;transform:scaleX(0.9000);transform-origin:0 0;font-weight:700">2 producten</div>
<div class="t" style="left:1047.00px;top:664.06px;font-size:13.04px;letter-spacing:1.301px;color:#1f4877;transform:scaleX(0.9000);transform-origin:0 0;font-weight:700">Verkoopprijs: €32,64</div>
<div class="t" style="left:304.50px;top:699.42px;font-size:18.41px;letter-spacing:2.309px;color:#1d4a7a;transform:scaleX(0.9000);transform-origin:0 0;-webkit-text-stroke:0.35px #1d4a7a">D-31557</div>
<div class="t" style="left:448.70px;top:701.76px;font-size:13.04px;letter-spacing:1.158px;color:#1f4877;transform:scaleX(0.9000);transform-origin:0 0;font-weight:700">Pete Johnson</div>
<div class="t" style="left:629.50px;top:701.76px;font-size:13.04px;letter-spacing:1.473px;color:#1f4877;transform:scaleX(0.9000);transform-origin:0 0;font-weight:700">02-08-2024, 05:19</div>
<div class="t" style="left:801.70px;top:701.76px;font-size:13.04px;letter-spacing:1.308px;color:#1f4877;transform:scaleX(0.9000);transform-origin:0 0;font-weight:700">Pakket</div>
<div class="t" style="left:937.50px;top:701.76px;font-size:13.04px;letter-spacing:1.394px;color:#1f4877;transform:scaleX(0.9000);transform-origin:0 0;font-weight:700">6 producten</div>
<div class="t" style="left:1047.00px;top:701.76px;font-size:13.04px;letter-spacing:1.301px;color:#1f4877;transform:scaleX(0.9000);transform-origin:0 0;font-weight:700">Verkoopprijs: €32,64</div>
<div class="t" style="left:304.40px;top:737.51px;font-size:15.94px;letter-spacing:1.658px;color:#1d4a7a;transform:scaleX(0.9000);transform-origin:0 0;-webkit-text-stroke:0.35px #1d4a7a">D-31557</div>
<div class="t" style="left:448.70px;top:739.46px;font-size:13.04px;letter-spacing:1.177px;color:#1f4877;transform:scaleX(0.9000);transform-origin:0 0;font-weight:700">Pjotr Jansson</div>
<div class="t" style="left:629.50px;top:739.46px;font-size:13.04px;letter-spacing:1.473px;color:#1f4877;transform:scaleX(0.9000);transform-origin:0 0;font-weight:700">02-08-2024, 05:19</div>
<div class="t" style="left:801.70px;top:739.46px;font-size:13.04px;letter-spacing:1.308px;color:#1f4877;transform:scaleX(0.9000);transform-origin:0 0;font-weight:700">Pakket</div>
<div class="t" style="left:937.50px;top:739.46px;font-size:13.04px;letter-spacing:1.394px;color:#1f4877;transform:scaleX(0.9000);transform-origin:0 0;font-weight:700">3 producten</div>
<div class="t" style="left:1047.00px;top:739.46px;font-size:13.04px;letter-spacing:1.301px;color:#1f4877;transform:scaleX(0.9000);transform-origin:0 0;font-weight:700">Verkoopprijs: €32,64</div>
<div class="t" style="left:304.40px;top:775.21px;font-size:15.94px;letter-spacing:1.658px;color:#1d4a7a;transform:scaleX(0.9000);transform-origin:0 0;-webkit-text-stroke:0.35px #1d4a7a">D-31557</div>
<div class="t" style="left:448.70px;top:777.16px;font-size:13.04px;letter-spacing:1.169px;color:#1f4877;transform:scaleX(0.9000);transform-origin:0 0;font-weight:700">Ping Jan-San</div>
<div class="t" style="left:629.50px;top:777.16px;font-size:13.04px;letter-spacing:1.473px;color:#1f4877;transform:scaleX(0.9000);transform-origin:0 0;font-weight:700">02-08-2024, 05:19</div>
<div class="t" style="left:801.70px;top:777.16px;font-size:13.04px;letter-spacing:1.308px;color:#1f4877;transform:scaleX(0.9000);transform-origin:0 0;font-weight:700">Pakket</div>
<div class="t" style="left:937.50px;top:777.16px;font-size:13.04px;letter-spacing:1.394px;color:#1f4877;transform:scaleX(0.9000);transform-origin:0 0;font-weight:700">4 producten</div>
<div class="t" style="left:1047.00px;top:777.16px;font-size:13.04px;letter-spacing:1.301px;color:#1f4877;transform:scaleX(0.9000);transform-origin:0 0;font-weight:700">Verkoopprijs: €32,64</div>
<div class="t" style="left:304.40px;top:812.91px;font-size:15.94px;letter-spacing:1.658px;color:#1d4a7a;transform:scaleX(0.9000);transform-origin:0 0;-webkit-text-stroke:0.35px #1d4a7a">D-31557</div>
<div class="t" style="left:448.70px;top:814.86px;font-size:13.04px;letter-spacing:1.282px;color:#1f4877;transform:scaleX(0.9000);transform-origin:0 0;font-weight:700">Pete Liberty</div>
<div class="t" style="left:629.50px;top:814.86px;font-size:13.04px;letter-spacing:1.473px;color:#1f4877;transform:scaleX(0.9000);transform-origin:0 0;font-weight:700">02-08-2024, 05:19</div>
<div class="t" style="left:801.70px;top:814.86px;font-size:13.04px;letter-spacing:1.308px;color:#1f4877;transform:scaleX(0.9000);transform-origin:0 0;font-weight:700">Pakket</div>
<div class="t" style="left:937.50px;top:814.86px;font-size:13.04px;letter-spacing:1.394px;color:#1f4877;transform:scaleX(0.9000);transform-origin:0 0;font-weight:700">4 producten</div>
<div class="t" style="left:1047.00px;top:814.86px;font-size:13.04px;letter-spacing:1.301px;color:#1f4877;transform:scaleX(0.9000);transform-origin:0 0;font-weight:700">Verkoopprijs: €32,64</div>
<div class="t" style="left:304.40px;top:850.61px;font-size:15.94px;letter-spacing:1.658px;color:#1d4a7a;transform:scaleX(0.9000);transform-origin:0 0;-webkit-text-stroke:0.35px #1d4a7a">D-31557</div>
<div class="t" style="left:448.70px;top:852.56px;font-size:13.04px;letter-spacing:1.340px;color:#1f4877;transform:scaleX(0.9000);transform-origin:0 0;font-weight:700">Marianneke van Hooge...</div>
<div class="t" style="left:629.50px;top:852.56px;font-size:13.04px;letter-spacing:1.473px;color:#1f4877;transform:scaleX(0.9000);transform-origin:0 0;font-weight:700">02-08-2024, 05:19</div>
<div class="t" style="left:801.70px;top:852.56px;font-size:13.04px;letter-spacing:1.308px;color:#1f4877;transform:scaleX(0.9000);transform-origin:0 0;font-weight:700">Pakket</div>
<div class="t" style="left:937.50px;top:852.56px;font-size:13.04px;letter-spacing:1.394px;color:#1f4877;transform:scaleX(0.9000);transform-origin:0 0;font-weight:700">3 producten</div>
<div class="t" style="left:1047.00px;top:852.56px;font-size:13.04px;letter-spacing:1.301px;color:#1f4877;transform:scaleX(0.9000);transform-origin:0 0;font-weight:700">Verkoopprijs: €32,64</div>
<div class="t" style="left:304.40px;top:888.31px;font-size:15.94px;letter-spacing:1.658px;color:#1d4a7a;transform:scaleX(0.9000);transform-origin:0 0;-webkit-text-stroke:0.35px #1d4a7a">D-31557</div>
<div class="t" style="left:448.70px;top:890.26px;font-size:13.04px;letter-spacing:1.209px;color:#1f4877;transform:scaleX(0.9000);transform-origin:0 0;font-weight:700">Piet Jansen</div>
<div class="t" style="left:629.50px;top:890.26px;font-size:13.04px;letter-spacing:1.473px;color:#1f4877;transform:scaleX(0.9000);transform-origin:0 0;font-weight:700">02-08-2024, 05:19</div>
<div class="t" style="left:801.70px;top:890.26px;font-size:13.04px;letter-spacing:1.308px;color:#1f4877;transform:scaleX(0.9000);transform-origin:0 0;font-weight:700">Pakket</div>
<div class="t" style="left:937.50px;top:890.26px;font-size:13.04px;letter-spacing:1.394px;color:#1f4877;transform:scaleX(0.9000);transform-origin:0 0;font-weight:700">2 producten</div>
<div class="t" style="left:1047.00px;top:890.26px;font-size:13.04px;letter-spacing:1.301px;color:#1f4877;transform:scaleX(0.9000);transform-origin:0 0;font-weight:700">Verkoopprijs: €32,64</div>
</body></html>
